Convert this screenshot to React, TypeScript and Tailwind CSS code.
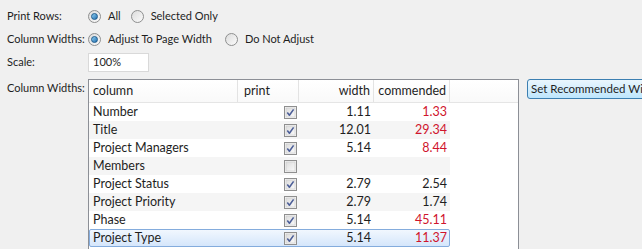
const rows = [
  { name: 'Number', print: true, width: '1.11', rec: '1.33', red: true },
  { name: 'Title', print: true, width: '12.01', rec: '29.34', red: true },
  { name: 'Project Managers', print: true, width: '5.14', rec: '8.44', red: true },
  { name: 'Members', print: false, width: '', rec: '', red: false },
  { name: 'Project Status', print: true, width: '2.79', rec: '2.54', red: false },
  { name: 'Project Priority', print: true, width: '2.79', rec: '1.74', red: false },
  { name: 'Phase', print: true, width: '5.14', rec: '45.11', red: true },
  { name: 'Project Type', print: true, width: '5.14', rec: '11.37', red: true },
];

function Radio({ checked }: { checked: boolean }) {
  return (
    <span className="relative inline-flex h-[13px] w-[13px] shrink-0 items-center justify-center rounded-full border border-[#8e8f8f] bg-gradient-to-br from-[#dcdcdc] to-[#fbfbfb]">
      {checked && (
        <span className="h-[7px] w-[7px] rounded-full border border-[#1c5a8c] bg-gradient-to-br from-[#8fd0f3] to-[#1f6fae]" />
      )}
    </span>
  );
}

function Check({ checked }: { checked: boolean }) {
  return (
    <svg width="13" height="13" viewBox="0 0 13 13" className="shrink-0">
      <defs>
        <linearGradient id="cb" x1="0" y1="0" x2="1" y2="1">
          <stop offset="0" stopColor="#dcdcdc" />
          <stop offset="1" stopColor="#fafafa" />
        </linearGradient>
      </defs>
      <rect x="0.5" y="0.5" width="12" height="12" fill="#f4f4f4" stroke="#8f8f8f" />
      <rect x="2" y="2" width="9" height="9" fill="url(#cb)" stroke="#c8c8c8" strokeWidth="0.6" />
      {checked && (
        <path d="M3.3 6.6 L5.4 9.2 L9.6 3.4" fill="none" stroke="#4d5f98" strokeWidth="1.6" strokeLinejoin="round" />
      )}
    </svg>
  );
}

export default function App() {
  return (
    <div className="h-[249px] w-[642px] overflow-hidden whitespace-nowrap bg-[#f0f0f0] text-[11px] text-[#1e1e1e] [font-family:Lato,'Liberation_Sans',sans-serif]">
      <div className="pt-[5px]">
        <div className="flex h-[23px] items-center">
          <span className="w-[88px] shrink-0 pl-[7px]">Print Rows:</span>
          <Radio checked />
          <span className="ml-[7px]">All</span>
          <span className="ml-[10px] flex items-center">
            <Radio checked={false} />
            <span className="ml-[7px]">Selected Only</span>
          </span>
        </div>
        <div className="flex h-[23px] items-center">
          <span className="w-[88px] shrink-0 pl-[7px]">Column Widths:</span>
          <Radio checked />
          <span className="ml-[7px]">Adjust To Page Width</span>
          <span className="ml-[13px] flex items-center">
            <Radio checked={false} />
            <span className="ml-[7px]">Do Not Adjust</span>
          </span>
        </div>
        <div className="flex h-[23px] items-center">
          <span className="w-[88px] shrink-0 pl-[7px]">Scale:</span>
          <div className="flex h-[19px] w-[61px] items-center border border-[#d9d9d9] bg-white pl-[4px]">100%</div>
        </div>
        <div className="mt-[5px] flex items-start">
          <span className="w-[88px] shrink-0 pl-[7px] pt-[1px]">Column Widths:</span>
          <div className="h-[200px] w-[431px] shrink-0 border border-b-0 border-[#8c8f96] bg-white text-[12.5px]">
            <div className="flex h-[23px] border-b border-[#e5e5e5] bg-gradient-to-b from-white to-[#f9f9f9]">
              <div className="flex w-[149px] items-center border-r border-[#e3e3e3] pl-[4px]">column</div>
              <div className="flex w-[61px] items-center border-r border-[#e3e3e3] pl-[6px]">print</div>
              <div className="flex w-[75px] items-center justify-end border-r border-[#e3e3e3] pr-[3px]">width</div>
              <div className="flex w-[76px] items-center justify-end border-r border-[#e3e3e3] pr-[3px]">commended</div>
              <div className="flex-1" />
            </div>
            {rows.map((r, i) => {
              const selected = i === rows.length - 1;
              return (
                <div
                  key={r.name}
                  className={
                    selected
                      ? 'flex h-[18px] w-[361px] items-center rounded-[2px] border border-[#84acdd] bg-gradient-to-b from-[#f1f7fe] to-[#d5e6fb]'
                      : i % 2 === 1
                        ? 'flex h-[18px] w-[361px] items-center border border-transparent bg-[#f5f5f5]'
                        : 'flex h-[18px] w-[361px] items-center border border-transparent bg-white'
                  }
                >
                  <div className="w-[148px] pl-[3px]">{r.name}</div>
                  <div className="flex w-[61px] justify-end pr-[2px]">
                    <Check checked={r.print} />
                  </div>
                  <div className="w-[75px] pr-[3px] text-right">{r.width}</div>
                  <div className={r.red ? 'w-[75px] pr-[2px] text-right text-[#d0142c]' : 'w-[75px] pr-[2px] text-right'}>
                    {r.rec}
                  </div>
                </div>
              );
            })}
          </div>
          <button className="ml-[8px] flex h-[20px] shrink-0 items-center whitespace-nowrap rounded-[3px] border border-[#3c7fb1] bg-gradient-to-b from-[#eaf6fd] to-[#bee6fd] px-[3px] text-[11.5px] text-[#1e1e1e]">
            Set Recommended Widths
          </button>
        </div>
      </div>
    </div>
  );
}
